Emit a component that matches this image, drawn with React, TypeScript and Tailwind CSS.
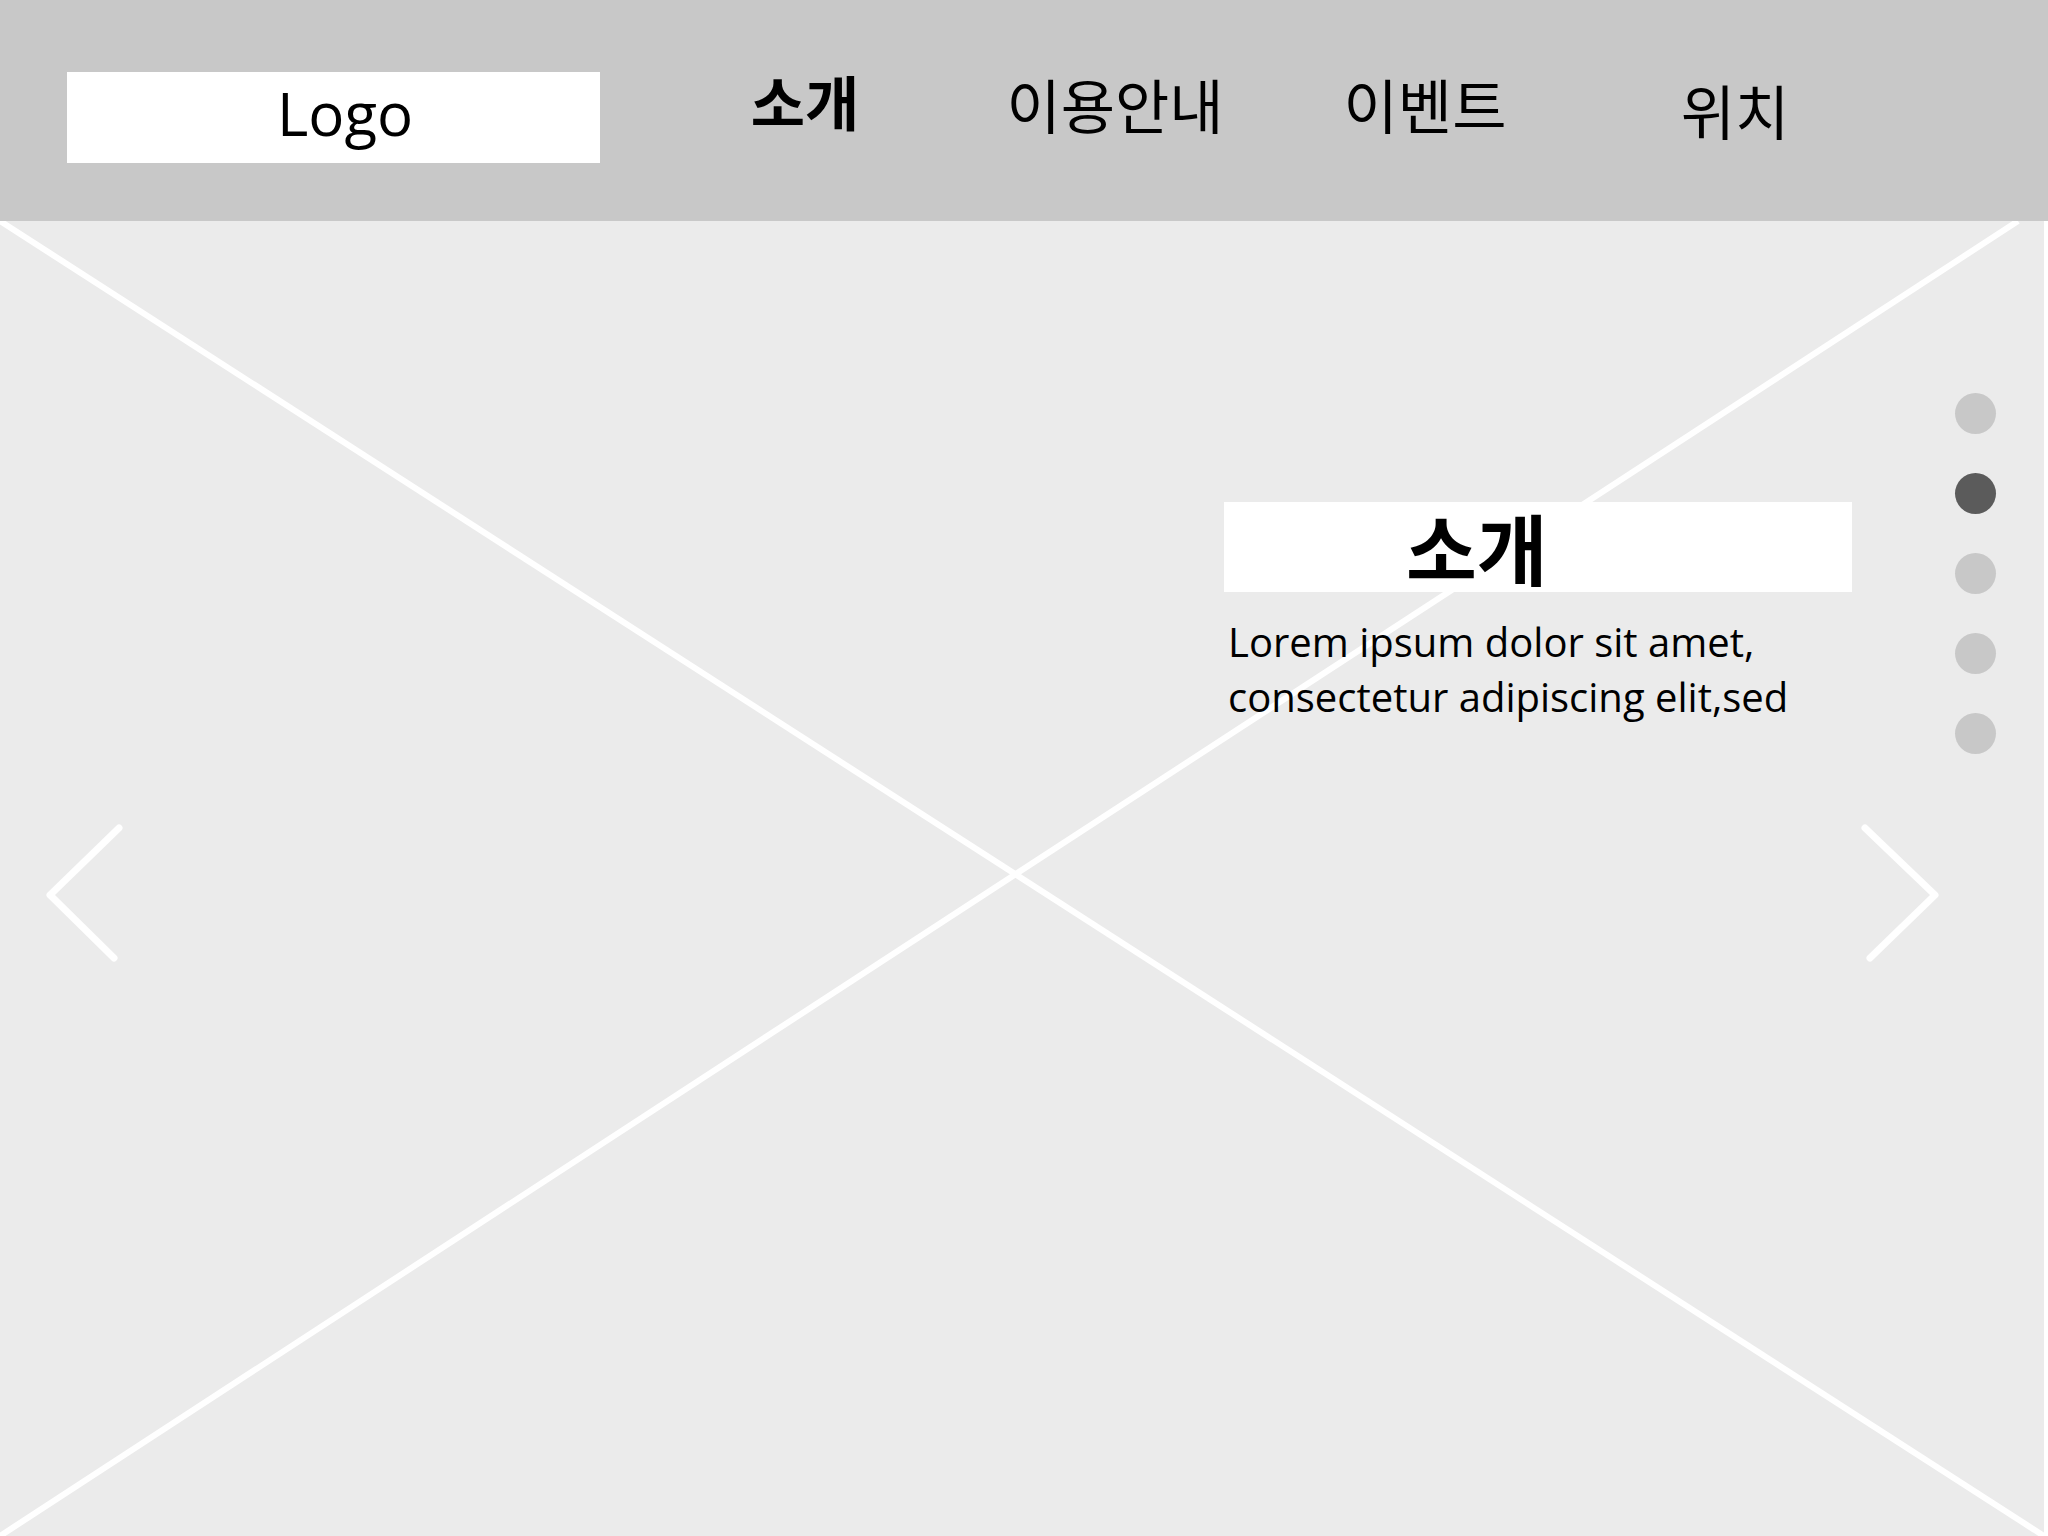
import React from 'react';

const menus = [
  { label: '소개', active: true, pad: 'pt-0' },
  { label: '이용안내', active: false, pad: 'pt-[3px]' },
  { label: '이벤트', active: false, pad: 'pt-[3px]' },
  { label: '위치', active: false, pad: 'pt-[9px]' },
];

const kr = { fontFamily: '"Noto Sans CJK KR", "Noto Sans", sans-serif' };
const latin = { fontFamily: '"Open Sans", "Noto Sans CJK KR", sans-serif' };

const Header = () => (
  <header className="flex h-[221px] items-start bg-[#c8c8c8]">
    <div className="ml-[67px] mt-[72px] h-[91px] w-[533px] bg-white pl-[210px] pt-[11px]">
      <span className="text-[60px] leading-[60px] text-black" style={latin}>
        Logo
      </span>
    </div>
    <nav className="ml-[50px] mt-[61px] grid grid-cols-4">
      {menus.map((m) => (
        <a
          key={m.label}
          href="#"
          className={
            'flex w-[310px] justify-center text-[59px] leading-[80px] text-black ' +
            m.pad +
            ' ' +
            (m.active ? 'font-bold' : 'font-normal')
          }
          style={kr}
        >
          {m.label}
        </a>
      ))}
    </nav>
  </header>
);

const Slider = () => {
  const current = 1;

  return (
    <section className="relative h-[1315px] flex-1 overflow-hidden bg-[#ebebeb]">
      {/* image placeholder */}
      <svg
        className="absolute inset-0 h-full w-full"
        viewBox="0 0 2044 1315"
        preserveAspectRatio="none"
      >
        <line x1="0" y1="0" x2="2044" y2="1315" stroke="#ffffff" strokeWidth="6" />
        <line x1="2018" y1="0" x2="0" y2="1315" stroke="#ffffff" strokeWidth="6" />
      </svg>

      <div className="absolute left-[1224px] top-[281px] w-[628px]">
        <div className="h-[90px] bg-white pl-[182px]">
          <h2 className="text-[77px] font-bold leading-[90px] text-black" style={kr}>
            소개
          </h2>
        </div>
        <p className="ml-[4px] mt-[22px] text-[40px] leading-[55px] text-black" style={latin}>
          Lorem ipsum dolor sit amet,
          <br />
          consectetur adipiscing elit,sed
        </p>
      </div>

      <div className="absolute right-[48px] top-[172px] flex flex-col gap-[39px]">
        {[0, 1, 2, 3, 4].map((i) => (
          <span
            key={i}
            className={
              'block h-[41px] w-[41px] rounded-full ' +
              (i === current ? 'bg-[#5b5b5b]' : 'bg-[#c8c8c8]')
            }
          />
        ))}
      </div>

      <button className="absolute left-[40px] top-[597px]" aria-label="prev">
        <svg width="90" height="150" viewBox="0 0 90 150" fill="none">
          <path
            d="M79 10 L10 77 L74 140"
            stroke="#ffffff"
            strokeWidth="7"
            strokeLinecap="round"
            strokeLinejoin="round"
          />
        </svg>
      </button>
      <button className="absolute left-[1855px] top-[597px]" aria-label="next">
        <svg width="90" height="150" viewBox="0 0 90 150" fill="none">
          <path
            d="M10 10 L80 77 L15 140"
            stroke="#ffffff"
            strokeWidth="7"
            strokeLinecap="round"
            strokeLinejoin="round"
          />
        </svg>
      </button>
    </section>
  );
};

const App = () => {
  return (
    <div className="h-[1536px] w-[2048px] overflow-hidden bg-white">
      <Header />
      <div className="flex">
        <Slider />
        <div className="w-[4px] bg-white" />
      </div>
    </div>
  );
};

export default App;
